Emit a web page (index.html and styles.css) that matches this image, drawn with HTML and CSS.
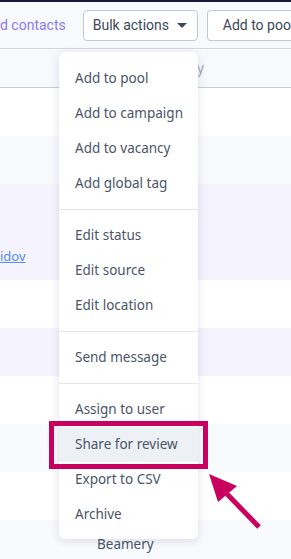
FILE: index.html
```html
<!DOCTYPE html>
<html lang="en">
<head>
    <meta charset="UTF-8">
    <meta name="viewport" content="width=device-width, initial-scale=1.0">
    <title>Contacts - Bulk actions</title>
    <link rel="stylesheet" href="styles.css">
</head>
<body>

    <div class="topbar"></div>

    <!-- Toolbar -->
    <div class="toolbar">
        <a class="contacts-link" href="#">d contacts</a>
        <button class="tool-btn bulk-btn">Bulk actions <span class="caret"></span></button>
        <button class="tool-btn pool-btn">Add to poo</button>
    </div>

    <!-- Table -->
    <div class="table">
        <div class="table-head"><span class="head-label">y</span></div>
        <div class="row"></div>
        <div class="row row-light"></div>
        <div class="row row-tall row-selected"><a class="name-link" href="#">idov</a></div>
        <div class="row"></div>
        <div class="row row-selected"></div>
        <div class="row"></div>
        <div class="row row-light"></div>
        <div class="row"></div>
        <div class="row row-light"><span class="company">Beamery</span></div>
    </div>

    <!-- Bulk actions menu -->
    <ul class="menu">
        <li>Add to pool</li>
        <li>Add to campaign</li>
        <li>Add to vacancy</li>
        <li>Add global tag</li>
        <li class="divider"></li>
        <li>Edit status</li>
        <li>Edit source</li>
        <li>Edit location</li>
        <li class="divider"></li>
        <li>Send message</li>
        <li class="divider"></li>
        <li>Assign to user</li>
        <li class="active">Share for review</li>
        <li>Export to CSV</li>
        <li>Archive</li>
    </ul>

    <!-- Annotation -->
    <div class="callout-box"></div>
    <svg class="callout-arrow" width="60" height="64" viewBox="0 0 60 64">
        <line x1="20" y1="22" x2="52" y2="55" stroke="#c8005f" stroke-width="5"/>
        <polygon points="2,2 30,14 11,30" fill="#c8005f"/>
    </svg>

</body>
</html>
```

FILE: styles.css
```css
body {
    margin: 0;
    padding: 0;
    background-color: #f8f9fd;
    font-family: 'Noto Sans', sans-serif;
    overflow: hidden;
    position: relative;
    height: 559px;
}
.topbar {
    height: 2px;
    background-color: #1b1736;
}
.toolbar {
    height: 47px;
    display: flex;
    align-items: center;
    font-family: Roboto, sans-serif;
    border-bottom: 1px solid #d3d8df;
    box-sizing: border-box;
    white-space: nowrap;
    overflow: hidden;
}
.contacts-link {
    color: #8a7cf3;
    font-size: 14px;
    text-decoration: none;
    margin-right: 17px;
}
.tool-btn {
    height: 31px;
    padding: 0 15px;
    background-color: #fff;
    border: 1px solid #c3c9d1;
    border-radius: 4px;
    font-family: Roboto, sans-serif;
    font-size: 14px;
    color: #3c4858;
    display: flex;
    align-items: center;
    flex-shrink: 0;
}
.bulk-btn {
    width: 115px;
    padding: 0 10px 0 9px;
    justify-content: space-between;
    margin-right: 9px;
}
.pool-btn {
    width: 100px;
    border-right: none;
    border-radius: 4px 0 0 4px;
}
.caret {
    width: 0;
    height: 0;
    border-left: 5px solid transparent;
    border-right: 5px solid transparent;
    border-top: 5px solid #3c4858;
}
.table-head {
    height: 39px;
    border-bottom: 1px solid #c6cbd2;
    box-sizing: border-box;
    display: flex;
    align-items: center;
    padding-left: 197px;
}
.head-label {
    color: #9aa6b6;
    font-size: 13.5px;
}
.row {
    height: 48px;
    background-color: #fff;
    display: flex;
    align-items: center;
    font-size: 13.5px;
    color: #4a5568;
}
.row:first-of-type {
    height: 49px;
}
.row-light {
    background-color: #f9fafe;
}
.row-selected {
    background-color: #f5f3fe;
}
.row-tall {
    height: 96px;
    align-items: flex-end;
}
.name-link {
    color: #4d8ef7;
    font-size: 13px;
    margin-bottom: 15px;
}
.company {
    padding-left: 97px;
}
.menu {
    position: absolute;
    left: 59px;
    top: 52px;
    width: 139px;
    margin: 0;
    padding: 9px 0 7px;
    list-style-type: none;
    background-color: #fff;
    border-radius: 6px;
    box-shadow: 0 2px 10px rgba(40, 50, 80, 0.14);
    font-size: 13.5px;
    color: #4a5568;
}
.menu li {
    height: 35px;
    line-height: 35px;
    padding-left: 16px;
    white-space: nowrap;
}
.menu li.divider {
    height: 1px;
    margin: 8px 0;
    padding: 0;
    background-color: #e2e7ee;
}
.menu li.active {
    background-color: #edf1f5;
}
.callout-box {
    position: absolute;
    left: 49px;
    top: 421px;
    width: 159px;
    height: 48px;
    border: 5px solid #c8005f;
    box-sizing: border-box;
}
.callout-arrow {
    position: absolute;
    left: 207px;
    top: 472px;
}
```
